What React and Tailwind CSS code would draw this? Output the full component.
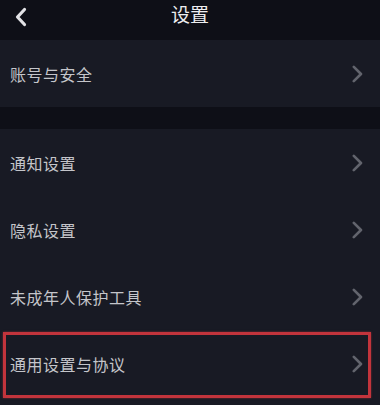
const Chevron = () => (
  <svg width="12" height="18" viewBox="0 0 12 18" fill="none" className="shrink-0">
    <path d="M2.8 1.8 L10 9 L2.8 16.2" stroke="#62646d" strokeWidth="2.6" strokeLinecap="round" strokeLinejoin="round" />
  </svg>
);

const Row = ({ label, highlighted }) => (
  <div className="relative flex items-center justify-between h-[67px] pl-[10px] pr-[17px]">
    <span className="text-[16px] text-[#c4c5ca] tracking-[0.5px]">{label}</span>
    <Chevron />
    {highlighted && (
      <div className="absolute left-[3px] right-[9px] top-[2px] bottom-[-1px] border-[3px] border-[#c2343c] shadow-[0_0_2px_rgba(194,52,60,0.6)] pointer-events-none" />
    )}
  </div>
);

export default function App() {
  return (
    <div
      className="w-[380px] h-[405px] overflow-hidden bg-[#0e0f17] flex flex-col"
      style={{ fontFamily: '"Noto Sans CJK SC", "Noto Sans", sans-serif' }}
    >
      {/* Header */}
      <div className="relative h-[40px] flex items-center justify-center">
        <button className="absolute left-[10px] top-[3px] p-1">
          <svg width="14" height="20" viewBox="0 0 14 20" fill="none">
            <path d="M10.5 2.5 L3.5 10 L10.5 17.5" stroke="#e2e2e6" strokeWidth="3.2" strokeLinecap="round" strokeLinejoin="round" />
          </svg>
        </button>
        <h1 className="text-[19px] text-[#ededf0] -mt-[12px]">设置</h1>
      </div>

      {/* Account */}
      <div className="bg-[#181a24]">
        <Row label="账号与安全" />
      </div>

      <div className="h-[22px]" />

      {/* Other settings */}
      <div className="bg-[#181a24] flex-1">
        <Row label="通知设置" />
        <Row label="隐私设置" />
        <Row label="未成年人保护工具" />
        <Row label="通用设置与协议" highlighted />
      </div>
    </div>
  );
}
